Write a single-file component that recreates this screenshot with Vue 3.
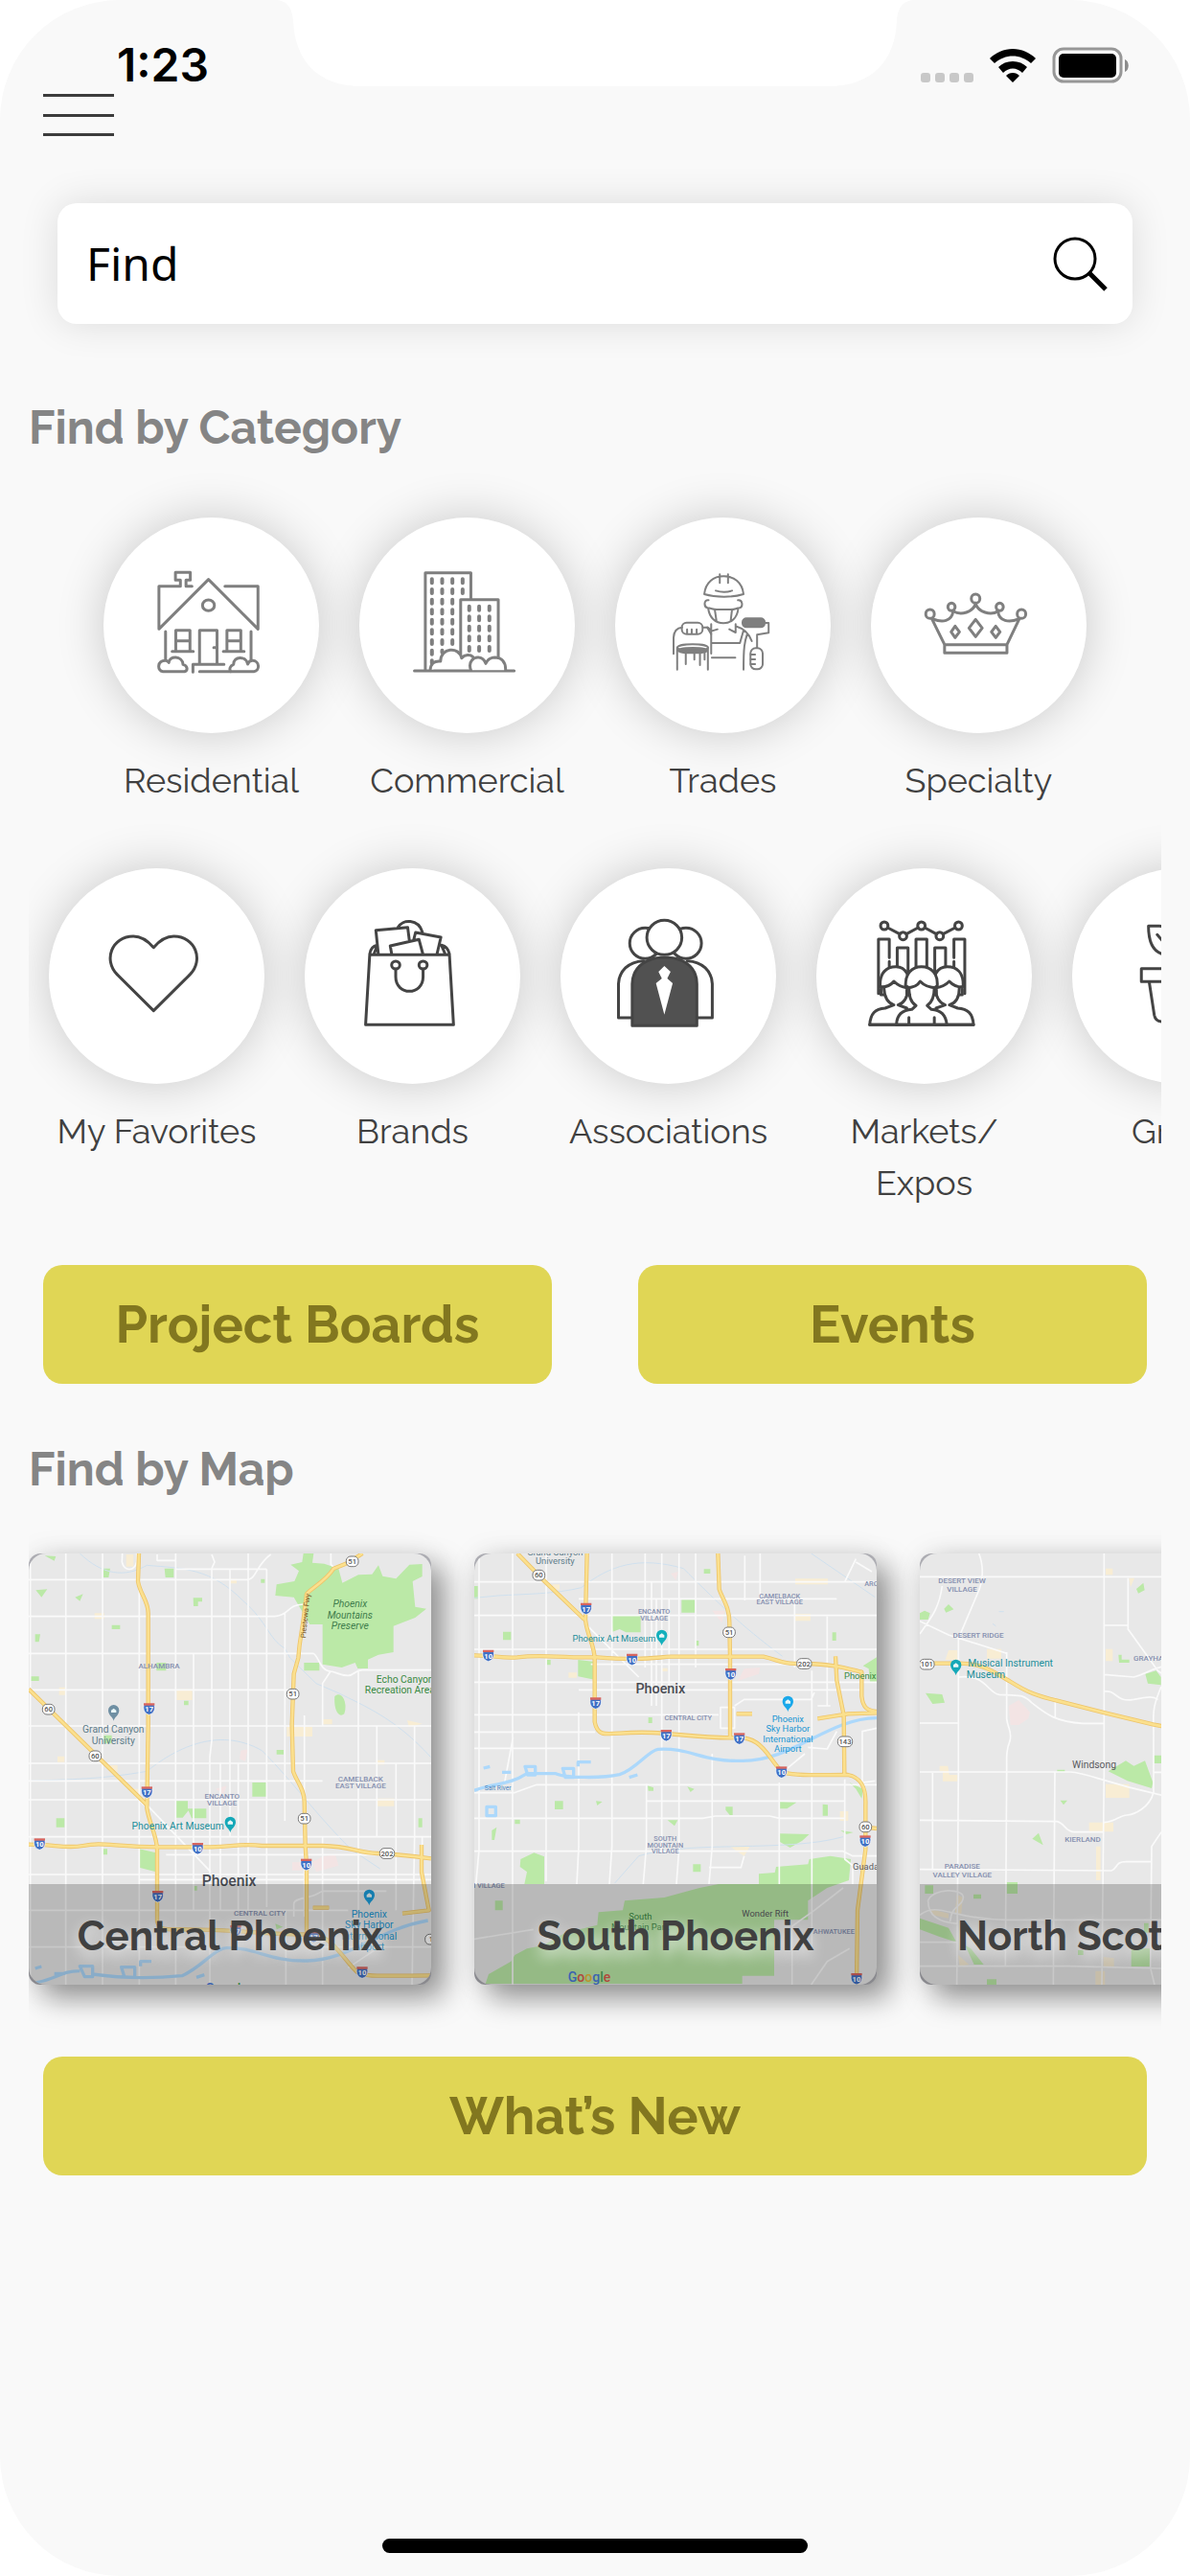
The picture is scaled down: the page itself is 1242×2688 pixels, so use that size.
<script setup>
import { ref } from 'vue'

const query = ref('')

const building = (xs, ys) =>
  xs.map((x) => ys.map((y) => `M${x} ${y}v12`).join('')).join('')

const categories = [
  {
    label: 'Residential',
    box: '52 60 653 675',
    tone: 'soft',
    art: `<path d="M285 275V256H270V232H315V256H302V275H320M285 275H220V409L370 254L520 409V275H420"/>
      <ellipse cx="370" cy="335" rx="18" ry="17"/>
      <path d="M240 417V505M499 417V505M271 475V413H314V475M271 446H314M426 475V413H468V475M426 446H468M260 479H324M415 479H478M343 518V413H396V518M386 467H394M323 544V520H417M343 542H437"/>
      <path d="M232 542C214 540 214 508 240 508C247 508 246 512 250 514C250 492 292 492 293 520C308 524 308 540 297 542ZM437 542C432 534 436 524 446 520C446 493 484 492 489 519C492 510 498 508 503 508C526 508 526 540 508 542Z"/>`,
  },
  {
    label: 'Commercial',
    box: '828 60 653 675',
    tone: 'soft',
    art: `<path d="M995 540H1297M1028 538V233H1166V313M1135 490V317H1249V498"/>
      <path stroke-width="4" d="${building([1048, 1079, 1110], [253, 285, 317, 349, 380, 412, 444])}${building([1141], [253, 285])}M1048 476v12M1048 508v8M1079 476v6${building([1161, 1191, 1222], [338, 370, 401, 433, 465])}"/>
      <path fill="#fff" d="M1043 538C1044 518 1054 508 1074 510C1074 468 1130 462 1138 500C1148 488 1164 488 1172 496"/>
      <path fill="#fff" d="M1166 538C1156 510 1176 496 1190 498C1200 499 1208 508 1211 517C1218 501 1230 498 1240 498C1260 499 1272 514 1271 538"/>`,
  },
  {
    label: 'Trades',
    box: '64 60 653 675',
    tone: 'fine',
    art: `<path d="M334 300C338 262 362 244 393 244C424 244 449 262 453 300C418 311 370 311 334 300ZM381 238V265M406 238V265M369 289C384 294 404 294 418 289"/>
      <path d="M347 319C332 316 332 340 344 343C356 344 360 348 372 348H415C427 348 430 344 441 343C452 340 451 317 436 319M346 345C350 374 368 391 392 391C416 391 434 374 437 345M366 349L371 384M418 349L414 384"/>
      <path d="M355 394V416L374 410M330 404H345L355 414M429 394V420L410 410M432 401C456 408 470 424 478 447M453 413L442 453H357M355 400V486M464 425C456 450 453 464 453 536M357 499H428"/>
      <path d="M241 487V436C242 416 252 405 267 404M343 404L355 425"/>
      <rect x="266" y="389" width="63" height="36" rx="15"/><path d="M282 423V410M296 423V410M311 423V410"/>
      <path d="M252 536V467M345 536V467M278 478V519M304 478V505M321 478V522M335 478V505"/>
      <ellipse cx="299" cy="467" rx="46" ry="10"/><ellipse cx="299" cy="476" rx="44" ry="8" fill="#7f7f7f"/>
      <rect x="450" y="376" width="67" height="27" rx="12" fill="#7f7f7f"/>
      <path d="M517 390H529V421L494 427V468"/><rect x="474" y="469" width="37" height="66" rx="16"/><path d="M475 489H488M475 504H488M475 519H488"/>`,
  },
  {
    label: 'Specialty',
    box: '839 60 653 675',
    tone: 'soft',
    art: `<ellipse cx="1156" cy="314" rx="13" ry="14"/><ellipse cx="1083" cy="340" rx="11" ry="12"/><ellipse cx="1229" cy="340" rx="11" ry="12"/><ellipse cx="1018" cy="362" rx="13" ry="14"/><ellipse cx="1295" cy="362" rx="13" ry="14"/>
      <path d="M1023 376L1062 458H1251L1289 376M1027 378C1055 389 1084 386 1088 353C1112 368 1148 356 1156 330C1164 356 1202 368 1224 353C1226 386 1258 389 1286 378M1062 458V484H1251V458"/>
      <path d="M1156 379L1176 406L1156 433L1136 406ZM1094 400L1107 418L1094 436L1082 418ZM1217 400L1230 418L1217 436L1204 418Z"/>`,
  },
]

const collections = [
  {
    label: 'My Favorites',
    box: '87 78 630 675',
    tone: 'dark',
    art: `<path d="M393 326C372 300 352 291 334 291C270 291 246 366 286 410L393 524L500 410C540 366 516 291 452 291C434 291 414 300 393 326Z"/>`,
  },
  {
    label: 'Brands',
    box: '834 78 630 675',
    tone: 'dark',
    art: `<path d="M1024 349H1257L1269 568H1012ZM1024 347C1026 332 1032 322 1046 319M1037 345L1046 320M1257 347C1254 332 1248 322 1234 319M1244 345L1234 320M1049 345L1042 272L1135 263L1140 305M1106 264C1120 236 1166 236 1178 278M1153 300L1158 279L1232 294L1221 345M1088 345L1084 321L1168 301L1179 345"/>
      <ellipse cx="1100" cy="381" rx="12" ry="12"/><ellipse cx="1180" cy="381" rx="12" ry="12"/>
      <path d="M1100 394V418C1100 478 1180 478 1180 418V394"/>`,
  },
  {
    label: 'Associations',
    box: '57 78 517 675',
    tone: 'dark',
    art: `<ellipse cx="260" cy="313" rx="37" ry="48"/><ellipse cx="358" cy="313" rx="37" ry="48"/>
      <path d="M196 546V440C197 400 220 370 256 368M421 546V440C420 400 397 370 361 368M196 546H229M385 546H421"/>
      <path fill="#515151" d="M229 571V440C230 380 272 354 307 358C342 354 384 380 384 440V571Z"/>
      <ellipse cx="306" cy="295" rx="42" ry="54" fill="#fff"/>
      <path fill="#fff" stroke="none" d="M306 384L321 402L313 423L326 438L306 536L286 438L300 423L292 402Z"/>`,
  },
  {
    label: 'Markets/\nExpos',
    box: '671 78 517 675',
    tone: 'dark',
    art: `<ellipse cx="834" cy="258" rx="9" ry="12"/><ellipse cx="879" cy="290" rx="9" ry="12"/><ellipse cx="923" cy="258" rx="9" ry="12"/><ellipse cx="967" cy="290" rx="9" ry="12"/><ellipse cx="1012" cy="258" rx="9" ry="12"/>
      <path d="M842 264L871 284M887 284L915 264M931 264L959 284M975 284L1004 264M820 470V300H846V358M846 370V390M1027 470V300H1001V358M1001 370V390M865 385V327H891V400M955 400V327H981V385M910 388V300H936V388"/>
      <path fill="#fff" d="M799 568C801 532 812 518 836 516L857 506C838 498 834 476 833 452L824 448C822 405 840 386 862 386C888 386 896 420 892 452C890 480 882 500 867 506L888 516V568ZM1048 568C1046 532 1034 518 1010 516L990 506C1010 498 1014 476 1014 452L1023 448C1025 405 1008 386 985 386C958 386 950 420 955 452C958 480 966 500 980 506L958 516V568Z"/>
      <path d="M826 450C838 450 850 444 857 432C866 444 876 450 888 452M1021 450C1010 450 998 444 990 432C981 444 970 450 958 452M826 456V474H834M1021 456V474H1013"/>
      <path fill="#fff" d="M863 568C864 540 874 522 900 520L910 508C896 496 894 478 893 452L885 446C884 408 900 386 923 386C947 386 963 408 961 446L954 452C954 478 950 496 937 508L947 520C972 522 982 540 984 568Z"/>
      <path d="M887 452C900 452 914 446 920 432C930 446 944 452 960 452M888 456V474H895M959 456V474H952M893 568V545M954 568V545M799 568H1048"/>`,
  },
  {
    label: 'Green',
    box: '1285 78 517 675',
    tone: 'dark',
    art: `<path d="M1468 259H1494C1530 262 1540 290 1538 346H1500C1476 336 1468 306 1468 259ZM1489 286L1538 360V392M1451 392H1626V433H1451ZM1470 436L1482 538C1484 552 1490 558 1500 558H1576C1586 558 1592 552 1594 538L1606 436"/>`,
  },
]

const SHIELD = 'M-16-13C-19-4-19 14 0 19C19 14 19-4 16-13Z'
const PIN = 'M0 25C-2 12-17 8-17-8A17 17 0 0 1 17-8C17 8 2 12 0 25Z'

const maps = [
  {
    name: 'Central Phoenix',
    scale: 'near',
    box: '30 63 1260 1350',
    parks:
      'M890 63H922L918 92L955 95L1000 110L1012 155L1062 130L1105 128L1125 100L1138 134L1180 142L1222 98L1262 96L1262 135L1232 150L1240 230L1275 236L1240 264L1172 290V372L1125 380L1092 395V423H1060L1052 405L1010 420L950 410V285H910L860 200L802 195L806 160L862 150L876 118L850 98L886 90ZM264 110H285L280 138H264ZM455 110H484V138H458ZM545 202H573V214H560V228H546ZM290 287H316V300H290ZM892 405H940V430H892ZM988 510C1010 490 1030 530 1018 565C1000 580 984 550 988 510ZM730 780H774V824H730ZM490 838H528V862H586V892H540L530 868L512 890H490ZM116 892H142V920H116ZM376 988L428 1000V1060L376 1046ZM265 632H290V658H265ZM430 405H460V430H430ZM806 678H828V692H806ZM516 524H530V538H516ZM50 316H66L62 340H50ZM52 178L88 175L70 200ZM175 200L200 190L190 212ZM36 448H62V462H36ZM1250 892H1262V920H1250ZM262 988H276V1006H262ZM545 1104H557V1118H545ZM802 1222L826 1232L806 1240ZM757 143H769V155H757ZM80 70L115 72L110 86Z',
    sand: 'M493 488H542V522H493ZM838 606H918V636H838ZM1122 830H1174V854H1122ZM236 250H266V268H236ZM355 800H376V816H355ZM660 143H681V157H660ZM125 482H145V506H125ZM120 698H142V716H120ZM284 726H308V746H284ZM950 582H980V598H950ZM1215 585L1262 596L1220 606ZM1118 710H1144V724H1118ZM335 66H358V104H335Z',
    pink: 'M950 1012L990 1006L1000 1040L930 1060L918 1030ZM694 680L716 676L708 714L690 706ZM615 800L650 790L640 816ZM855 1030H885V1055H855Z',
    creek:
      'M190 63C260 130 330 140 400 100C520 110 600 110 700 210C780 280 780 330 832 360L848 390L930 470L1000 500C1080 540 1180 580 1288 700M30 775C160 770 260 770 400 745C480 680 620 600 760 680C860 780 920 870 1040 990L1130 1050',
    river:
      'M30 1410C120 1400 120 1370 190 1370M190 1355H230V1388H205ZM320 1358H362V1390H330ZM230 1380C300 1390 400 1395 510 1385C570 1360 610 1300 650 1298C740 1295 780 1340 900 1338C1040 1335 1120 1240 1280 1212M50 1362L70 1356M110 1378H144M380 1355V1340H414M555 1390L580 1382',
    streets:
      'M35 63V1413M146 63V1413M261 63V1413M376 145V1413M490 63V1413M546 376V1180M717 63V1100M775 112V1170M660 112V950M893 570V1200M1120 603V950M1180 720V1180M1238 603V950L1230 1413M1062 430V1180M832 250V900M1262 950V1000M30 145H716C740 145 745 95 788 66M30 260H800C850 255 835 225 890 222M30 376H920C935 376 940 430 975 432C990 432 1000 445 1030 445C1050 445 1050 428 1075 428H1290M30 490H850M30 603H1290M30 720H1290M30 775H950M30 834H1290M30 950H1290M460 1006H1180M30 1068H1290M376 1084H1290M30 1180H1030M30 1295H560M900 1295H1290M976 63V98L990 110M950 603V470L975 432M432 66V85H490M490 112H775M603 66L612 90L603 110V650L597 700V1413M630 720V1180M686 720V1180M717 834V1180M835 1180V1413M950 950V1413M400 850L600 1060M346 800L390 850M860 1200V1160C860 1140 920 1140 930 1130L950 1120H1150M1030 1360L1120 1300M323 63L322 90C330 120 360 120 368 90V63',
    highways:
      'M375 63L372 150C378 190 404 210 404 250V600L400 860C405 900 432 950 432 990V1215C440 1245 460 1240 520 1240C700 1240 800 1260 920 1255C980 1260 1020 1340 1060 1375C1080 1390 1150 1384 1290 1384M30 488L400 850M30 974C110 974 150 988 200 978C260 965 300 982 440 982H600C680 980 700 970 760 978H950C1040 980 1060 1000 1120 1002C1180 1004 1230 1010 1290 1018M1075 63L1030 92L985 110C960 150 910 175 900 190L890 270C885 310 878 330 874 390L860 440L854 600L858 745C870 780 893 800 893 840L896 980L900 1040V1255M1260 975V1060L1283 1180L1200 1190M920 1172H970',
    shields: [[407, 549, '17'], [400, 810, '17'], [434, 1136, '17'], [64, 972, '10'], [559, 986, '10'], [899, 1036, '10'], [1074, 1374, '10'], [678, 1244, '17'], [922, 1262, '17']],
    routes: [[1043, 88, '51'], [857, 503, '51'], [893, 893, '51'], [1152, 1002, '202'], [92, 551, '60'], [238, 697, '60'], [1290, 1271, '1']],
    pins: [[296, 562, '#6f8fa3'], [661, 912, '#14a8b8'], [1096, 1140, '#1c9edb']],
    labels: [
      [1036, 232, 'Phoenix', 'park'], [1036, 266, 'Mountains', 'park'], [1036, 300, 'Preserve', 'park'],
      [1208, 468, 'Echo Canyon', 'green'], [1192, 502, 'Recreation Area', 'green'],
      [438, 422, 'ALHAMBRA', 'area'], [635, 831, 'ENCANTO', 'area'], [635, 853, 'VILLAGE', 'area'],
      [1069, 776, 'CAMELBACK', 'area'], [1069, 798, 'EAST VILLAGE', 'area'], [753, 1196, 'CENTRAL CITY', 'area'],
      [295, 624, 'Grand Canyon', 'place'], [295, 659, 'University', 'place'],
      [497, 926, 'Phoenix Art Museum', 'teal'], [657, 1103, 'Phoenix', 'city'],
      [1096, 1203, 'Phoenix', 'blue'], [1096, 1237, 'Sky Harbor', 'blue'], [1096, 1271, 'International', 'blue'], [1096, 1305, 'Airport', 'blue'],
    ],
    turned: [896, 258, 'Piestewa Fwy'],
    logo: [650, 1440],
  },
  {
    name: 'South Phoenix',
    scale: 'far',
    box: '45 63 1260 1350',
    parks:
      'M475 258H566V310H520L500 300L478 308ZM694 208H736V248H694ZM135 308H160V334H135ZM370 396L422 402V458L370 448ZM45 165H56V205H45ZM764 112H784V126H764ZM1166 310H1178V336H1166ZM1262 415L1305 388V465H1284L1280 424ZM297 838H323V864H297ZM426 838L446 840L430 852ZM588 790L606 796V806H590ZM712 793L734 800L722 810ZM832 856H854V882H845L832 866ZM1002 840L1054 842L1024 862H1002ZM1136 848L1152 850V884H1136ZM172 896H188V910H172ZM650 898H682L672 916ZM1002 940L1094 942L1072 962L1034 984L1002 966ZM730 1036H754V1060H730ZM190 1020L232 1000L264 1012V1098H202L210 1060L188 1044ZM936 1066L986 1062L990 1044L1090 1036L1094 1020L1160 1010L1224 1020L1218 1086L1150 1110L1090 1150V1210H984V1385H884V1410H80L90 1380L160 1340L172 1320L210 1300L260 1290L330 1250L430 1226L434 1186L510 1180L516 1150L640 1140L750 1110L810 1098H936ZM110 1150H134V1180H110ZM272 396H284V412H272ZM738 336H748V352H738ZM590 576H602V594H590ZM1192 930L1232 936L1210 942ZM100 930L115 920L108 960H100ZM1220 780L1262 800L1258 830L1240 800Z',
    sand: 'M1050 252H1098V274H1050ZM1050 142H1152V160H1050ZM846 980H908L890 1010ZM340 436H366V452H340ZM630 422H650V432H630ZM290 160H312V176H290ZM1190 870H1216V900H1190Z',
    pink: 'M890 424L940 420L936 440L870 462ZM660 126L684 120L676 146ZM790 242H830L820 280Z',
    creek:
      'M45 202L120 195C200 190 300 190 380 170C470 100 560 70 700 110C790 200 880 290 1010 385M1100 63L1300 200M485 1095L560 1010C720 960 1020 1000 1200 950',
    river:
      'M45 805C110 780 150 790 210 752H300C330 765 440 768 500 755C550 740 590 680 620 676C720 670 760 716 880 712C1040 716 1150 580 1305 578M204 730H236V756H212ZM322 736H356V764H330ZM74 735L94 730M132 748H160M370 730V716H410M530 764L556 756M84 856H112V884H84Z',
    streets:
      'M60 63V990L50 1100M165 63V1413M270 63V1090M372 560V980L366 1098M476 63V980L468 1098M584 784V980L574 1098M632 63V1000M686 63V990L678 1098M790 690V980L780 1098M1000 780V1098M1102 430V1300M1205 770V1020L1230 1040V1098M1048 210V420M738 63V420M892 70V210M940 63V210M1150 260V540M1120 540H1160M580 63V420M45 152H1305M372 205H1180M45 257H1305M45 363H1305M410 410H1102M45 466H1305M372 490H1260M45 568H810M45 622H424M45 673H470M45 812H170L240 787H1305M584 838H1205M45 892H760L800 885H970L1000 892H1205M45 995H1200L1230 1010H1305M780 1046H880L890 1010M390 280L560 450M1205 152L1240 80M1240 90L1290 120M816 610V545H860V610ZM860 540L890 520H1100L1110 498M1180 620L1150 675L1090 670M1020 740L1080 690M600 152V540M615 205V540M655 205V490M1305 610L1260 620V780L1300 775M1040 1413V1230L1110 1180L1200 1110M1100 1413L1150 1340L1220 1300M45 1270L230 1240M140 780L166 640',
    highways:
      'M180 63L260 145L390 270M398 63L393 270C398 320 422 350 422 395V590C430 632 450 630 500 626C640 615 700 640 850 640C950 630 960 700 1010 748C1060 760 1120 756 1215 756C1260 765 1272 800 1270 850V990L1245 1180L1242 1413M45 382C110 382 130 392 180 388C260 378 300 390 430 388C560 398 600 390 660 386H950C1010 400 1000 408 1080 408C1170 410 1200 420 1258 434V510C1262 550 1280 555 1305 558M808 63L812 175C822 205 844 230 844 280L846 390V640M1176 385L1180 460L1202 570L1204 760M1120 580L1215 565L1305 562M866 565H915M1270 920L1305 924',
    shields: [[395, 235, '17'], [89, 382, '10'], [539, 394, '10'], [848, 440, '10'], [425, 531, '17'], [646, 632, '17'], [875, 642, '17'], [1007, 747, '10'], [1269, 963, '10'], [1242, 1394, '10']],
    routes: [[247, 131, '60'], [843, 310, '51'], [1078, 408, '202'], [1206, 652, '143'], [1270, 919, '60']],
    pins: [[632, 327, '#14b0bc'], [1027, 534, '#1aa8ea']],
    labels: [
      [298, 68, 'Grand Canyon', 'place'], [298, 97, 'University', 'place'],
      [608, 252, 'ENCANTO', 'area'], [608, 273, 'VILLAGE', 'area'], [1001, 203, 'CAMELBACK', 'area'], [1001, 223, 'EAST VILLAGE', 'area'],
      [1313, 164, 'ARCADIA', 'area'], [715, 584, 'CENTRAL CITY', 'area'],
      [643, 962, 'SOUTH', 'area'], [643, 983, 'MOUNTAIN', 'area'], [643, 1003, 'VILLAGE', 'area'],
      [483, 339, 'Phoenix Art Museum', 'teal'], [628, 500, 'Phoenix', 'city'],
      [1027, 591, 'Phoenix', 'blue'], [1027, 622, 'Sky Harbor', 'blue'], [1027, 653, 'International', 'blue'], [1027, 684, 'Airport', 'blue'],
      [1281, 455, 'Phoenix Zoo', 'green'], [119, 803, 'Salt River', 'stream'], [1297, 1053, 'Guadalupe', 'town'],
      [54, 1109, 'LAVEEN VILLAGE', 'area'], [565, 1210, 'South', 'green'], [565, 1241, 'Mountain Park', 'green'],
      [956, 1200, 'Wonder Rift', 'town'], [1171, 1254, 'AHWATUKEE', 'area'],
    ],
    logo: [405, 1404],
  },
  {
    name: 'North Scottsdale',
    scale: 'near',
    box: '90 63 1260 1350',
    parks:
      'M90 250L105 242L122 250L116 270H90ZM166 236L180 222L196 238L172 248ZM768 174L790 155L794 178L774 188ZM108 500L160 504L168 530L130 534ZM712 380H722V395H746V405H714ZM796 440L830 430L845 450V475L804 470ZM680 745L735 712L760 728L795 712L820 780L816 798L740 775ZM822 695H846V720H822ZM530 836H552L540 850ZM442 956L462 938L476 976ZM362 1092H396V1128H362ZM106 1102H132V1128H106ZM258 1130H282V1144H258ZM90 1205L180 1235L205 1280L150 1262L90 1240ZM232 1290L250 1300L290 1350L260 1350ZM752 1300H810V1356H752ZM300 1396H330V1413H300ZM585 1305H602V1320H585ZM520 740H544V746H520ZM792 1220H806V1250H792Z',
    sand: 'M672 110H694V130H672ZM745 140H762L750 168ZM672 362H694V400H672ZM300 362H345V392H300ZM180 366H208V396H170ZM672 785H746V828H672ZM620 905H696V934H620ZM642 980H656V1086H642ZM152 728H178L182 756H208V776H162V745H152ZM206 1130L224 1140L220 1190H200ZM210 1320L244 1350L215 1356ZM665 1326L698 1330V1356H665ZM640 1370H670V1413H640ZM120 1175L180 1190V1205L130 1195Z',
    pink: 'M368 540L400 522L435 560L430 580L400 600H374Z',
    creek: 'M318 283L328 290M338 245H353',
    river: '',
    streets:
      'M211 320V745L206 1413M362 372V580C365 610 380 620 372 650C360 680 362 700 362 740L358 1355M514 515V580M513 745L508 1413M667 63V740L660 1413M130 750V1050M275 63C290 100 290 150 270 190L215 320M160 165C150 240 120 270 90 315M90 275L180 318L360 375M90 136H850M667 288H742M742 140V300L835 430L850 440M667 442L760 450C800 440 800 430 846 418M667 495C710 490 700 530 760 520C810 510 820 510 836 520M846 480C820 540 820 560 822 620V810C810 860 760 880 740 882C720 880 700 905 667 905M211 450C300 440 300 500 340 505C400 510 410 500 440 530C490 570 520 590 600 595H667M90 594H211M90 747H560C620 750 660 780 850 820M90 898L520 902C545 908 545 935 575 935H667M90 1052L690 1056C710 1050 700 1028 735 1028H815M846 935L816 980L812 1360L825 1413M822 748H846M90 1355H560L850 1362M358 1210H850M90 1280H206M116 1150C130 1110 228 1110 226 1140C225 1170 190 1160 185 1215M116 1150C115 1210 170 1220 210 1222M90 1195C150 1150 190 1210 360 1210',
    highways: 'M130 407H210C290 405 330 440 370 462C430 500 460 510 520 524L670 562L820 598L860 606',
    shields: [],
    routes: [[112, 410, '101']],
    pins: [[203, 420, '#14a8b8']],
    labels: [
      [222, 156, 'DESERT VIEW', 'area'], [222, 182, 'VILLAGE', 'area'], [273, 326, 'DESERT RIDGE', 'area'],
      [824, 400, 'GRAYHAWK', 'area'], [600, 965, 'KIERLAND', 'area'], [223, 1050, 'PARADISE', 'area'], [223, 1076, 'VALLEY VILLAGE', 'area'],
      [374, 416, 'Musical Instrument', 'teal'], [297, 453, 'Museum', 'teal'], [636, 734, 'Windsong', 'town'],
    ],
  },
]

const logoLetters = [['G', '#4a7bdc'], ['o', '#dc5a4c'], ['o', '#e8b93a'], ['g', '#4a7bdc'], ['l', '#4fa660'], ['e', '#dc5a4c']]
</script>

<template>
  <div class="phone">
    <svg class="notch" viewBox="286 0 670 90" aria-hidden="true">
      <path fill="#fff" d="M286 0C300 0 305 8 306 22C308 62 330 90 378 90H864C912 90 934 62 936 22C937 8 942 0 956 0Z" />
    </svg>

    <div class="status">
      <time class="clock">1:23</time>
      <div class="signals">
        <span class="cell"><i v-for="n in 4" :key="n"></i></span>
        <svg width="50" height="37" viewBox="0 0 50 37" aria-hidden="true">
          <path d="M25 1C34 1 43 5 49 11L44 16C33 6 17 6 6 16L1 11C7 5 16 1 25 1ZM25 14C31 14 36 16 40 20L35 26C29 20 21 20 15 26L10 20C14 16 19 14 25 14ZM25 26C28 26 30 27 32 29L25 36L18 29C20 27 22 26 25 26Z" />
        </svg>
        <svg width="80" height="38" viewBox="0 0 80 38" aria-hidden="true">
          <rect x="2" y="2" width="70" height="34" rx="10" fill="none" stroke="#979797" stroke-width="3" />
          <rect x="7" y="7" width="60" height="25" rx="5" />
          <path d="M76 13C81 15 81 24 76 26Z" fill="#8c8c8c" />
        </svg>
      </div>
    </div>

    <header class="top">
      <button class="menu" type="button" aria-label="Menu"><i></i><i></i><i></i></button>
      <form class="search" role="search" @submit.prevent>
        <input v-model="query" type="text" placeholder="Find" aria-label="Find" />
        <button type="submit" aria-label="Search">
          <svg width="60" height="60" viewBox="0 0 60 60" fill="none" stroke="#000" aria-hidden="true">
            <circle cx="24" cy="25" r="21" stroke-width="3" />
            <path d="M39 40L56 57" stroke-width="5" />
          </svg>
        </button>
      </form>
    </header>

    <main>
      <h2>Find by Category</h2>
      <nav class="row" aria-label="Categories">
        <a v-for="c in categories" :key="c.label" class="item" href="#">
          <span class="disc">
            <svg :class="['art', c.tone]" :viewBox="c.box" preserveAspectRatio="none" aria-hidden="true" v-html="c.art"></svg>
          </span>
          <span class="label">{{ c.label }}</span>
        </a>
      </nav>
      <nav class="row scroller" aria-label="Collections">
        <a v-for="c in collections" :key="c.label" class="item" href="#">
          <span class="disc">
            <svg :class="['art', c.tone]" :viewBox="c.box" preserveAspectRatio="none" aria-hidden="true" v-html="c.art"></svg>
          </span>
          <span class="label">{{ c.label }}</span>
        </a>
      </nav>

      <div class="actions">
        <button class="action" type="button">Project Boards</button>
        <button class="action" type="button">Events</button>
      </div>

      <h2>Find by Map</h2>
      <div class="cards">
        <a v-for="m in maps" :key="m.name" class="card" href="#">
          <svg :class="['map', m.scale]" :viewBox="m.box" aria-hidden="true">
            <path :d="m.pink" fill="#f3e4e4" />
            <path :d="m.sand" fill="#f8edd4" />
            <path :d="m.parks" fill="#bbe9a7" />
            <path :d="m.creek" class="creek" />
            <path :d="m.streets" class="street" />
            <path v-if="m.river" :d="m.river" class="river" />
            <path :d="m.highways" class="casing" />
            <path :d="m.highways" class="highway" />
            <g v-for="([x, y, t], i) in m.shields" :key="'s' + i" :transform="`translate(${x} ${y})`">
              <path :d="SHIELD" fill="#3f6fc4" stroke="#fff" stroke-width="2" />
              <path d="M-17-17H17V-10H-17Z" fill="#d7655f" />
              <text class="num" y="10">{{ t }}</text>
            </g>
            <g v-for="([x, y, t], i) in m.routes" :key="'r' + i" :transform="`translate(${x} ${y})`">
              <rect :x="t.length > 2 ? -23 : -19" y="-16" :width="t.length > 2 ? 46 : 38" height="32" rx="14" fill="#fff" stroke="#777" stroke-width="3" />
              <text class="num route" y="8">{{ t }}</text>
            </g>
            <g v-for="([x, y, color], i) in m.pins" :key="'p' + i" :transform="`translate(${x} ${y})`">
              <path :d="PIN" :fill="color" />
              <path d="M-8-8L0-14L8-8V-1H-8Z" fill="#e9f7f8" />
            </g>
            <text v-for="([x, y, t, kind], i) in m.labels" :key="'l' + i" :x="x" :y="y" :class="kind">{{ t }}</text>
            <text v-if="m.turned" class="fwy" :transform="`translate(${m.turned[0]} ${m.turned[1]}) rotate(-84)`" y="8">{{ m.turned[2] }}</text>
            <text v-if="m.logo" class="logo" :x="m.logo[0]" :y="m.logo[1]"><tspan v-for="([ch, color], i) in logoLetters" :key="i" :fill="color">{{ ch }}</tspan></text>
          </svg>
          <span class="caption">{{ m.name }}</span>
        </a>
      </div>

      <div class="actions">
        <button class="action" type="button">What’s New</button>
      </div>
    </main>

    <div class="home"></div>
  </div>
</template>

<style>
body {
  background: #fff;
}
</style>

<style scoped>
.phone {
  position: relative;
  display: flex;
  flex-direction: column;
  box-sizing: border-box;
  min-height: 100vh;
  padding: 38px 0 24px;
  border-radius: 125px;
  background: #f9f9f9;
  overflow: hidden;
  font-family: Raleway, Lato, sans-serif;
  color: #404040;
}
button {
  border: 0;
  padding: 0;
  background: none;
  font: inherit;
  cursor: pointer;
}
a {
  color: inherit;
  text-decoration: none;
}
svg {
  display: block;
}
.notch {
  position: absolute;
  top: 0;
  left: 50%;
  width: 670px;
  transform: translateX(-50%);
}
.status {
  display: flex;
  justify-content: space-between;
  align-items: center;
  height: 60px;
  padding: 0 64px 0 122px;
}
.clock {
  font: 600 48px/60px Inter, sans-serif;
  color: #000;
}
.signals {
  display: flex;
  align-items: flex-end;
  gap: 16px;
}
.cell {
  display: flex;
  gap: 5px;
  margin-bottom: 1px;
}
.cell i {
  width: 10px;
  height: 10px;
  border-radius: 3px;
  background: #c8c8c8;
}
.menu {
  display: flex;
  flex-direction: column;
  justify-content: space-between;
  width: 74px;
  height: 44px;
  margin: 0 0 70px 45px;
}
.menu i {
  height: 3px;
  background: #3c3c3c;
}
.search {
  display: flex;
  align-items: center;
  height: 126px;
  margin: 0 60px;
  padding: 0 24px 0 30px;
  box-sizing: border-box;
  border-radius: 20px;
  background: #fff;
  box-shadow: 0 0 40px rgba(0, 0, 0, 0.12);
}
.search input {
  flex: 1;
  min-width: 0;
  border: 0;
  padding: 0;
  outline: 0;
  background: none;
  font: 48px/72px "Noto Sans", sans-serif;
  color: #000;
}
.search input::placeholder {
  color: #000;
  opacity: 1;
}
main {
  padding: 0 30px;
}
h2 {
  margin: 78px 0 64px;
  font-size: 48px;
  line-height: 60px;
  font-weight: 700;
  color: #858585;
}
.row {
  display: flex;
  justify-content: center;
}
.scroller {
  justify-content: flex-start;
  overflow-x: auto;
  scrollbar-width: none;
  margin-top: 15px;
  padding-top: 50px;
}
.item {
  flex: 0 0 267px;
  display: flex;
  flex-direction: column;
  align-items: center;
  gap: 22px;
}
.disc {
  width: 225px;
  height: 225px;
  border-radius: 50%;
  background: #fff;
  box-shadow: 0 0 50px rgba(0, 0, 0, 0.2);
}
.art {
  width: 100%;
  height: 100%;
  fill: none;
  stroke-linecap: round;
  stroke-linejoin: round;
}
.art :deep(*) {
  vector-effect: non-scaling-stroke;
}
.soft {
  stroke: #7f7f7f;
  stroke-width: 3px;
}
.fine {
  stroke: #7f7f7f;
  stroke-width: 2px;
}
.dark {
  stroke: #444;
  stroke-width: 3px;
}
.label {
  font-size: 36px;
  line-height: 54px;
  font-weight: 400;
  text-align: center;
  white-space: pre-line;
}
.actions {
  display: flex;
  gap: 90px;
  margin: 59px 15px 57px;
}
.action {
  flex: 1;
  height: 124px;
  border-radius: 20px;
  background: #e0d655;
  color: #82771f;
  font-size: 54px;
  line-height: 66px;
  font-weight: 700;
}
.actions + h2 {
  margin: 59px 0 18px;
}
.cards {
  display: flex;
  gap: 45px;
  padding: 40px 0 60px;
  overflow-x: auto;
  scrollbar-width: none;
}
.cards + .actions {
  margin-top: 15px;
}
.card {
  position: relative;
  flex: 0 0 420px;
  border-radius: 12px;
  background: #acacb2;
  box-shadow: 14px 14px 30px rgba(0, 0, 0, 0.4), 0 0 30px rgba(0, 0, 0, 0.08);
}
.map {
  width: 100%;
  border-radius: 18px;
  background: #e8e8e8;
  font-family: Roboto, sans-serif;
}
.caption {
  position: absolute;
  inset: auto 0 0;
  height: 105px;
  box-sizing: border-box;
  padding-top: 4px;
  border-radius: 0 0 12px 12px;
  background: rgba(0, 0, 0, 0.2);
  font-size: 42px;
  line-height: 101px;
  font-weight: 700;
  text-align: center;
  text-shadow: 0 6px 15px rgba(255, 255, 255, 0.8);
}
.map path {
  stroke-linejoin: round;
}
.creek,
.street,
.river,
.casing,
.highway {
  fill: none;
}
.creek {
  stroke: #cfe0ee;
  stroke-width: 3px;
}
.street {
  stroke: #fafafa;
  stroke-width: 5px;
}
.river {
  stroke: #acd8fb;
  stroke-width: 10px;
}
.casing {
  stroke: #edc46a;
  stroke-width: 13px;
}
.highway {
  stroke: #fbe08e;
  stroke-width: 8px;
}
.map text {
  text-anchor: middle;
}
.near {
  font-size: 31px;
}
.far {
  font-size: 28px;
}
.map .num {
  font-size: 23px;
  font-weight: 700;
  fill: #fff;
}
.map .route {
  font-weight: 500;
  fill: #555;
}
.near .area {
  font-size: 24px;
}
.far .area {
  font-size: 22px;
}
.area {
  font-weight: 500;
  fill: #8690b0;
}
.park {
  font-style: italic;
  fill: #3f7d4c;
}
.green {
  fill: #3a8a43;
}
.place {
  fill: #607d8b;
}
.teal {
  fill: #1c8f9b;
}
.blue {
  fill: #2196d3;
}
.city {
  font-weight: 500;
  fill: #4a4d55;
}
.near .city {
  font-size: 47px;
}
.far .city {
  font-size: 43px;
}
.town {
  fill: #5a5a5f;
}
.stream {
  font-size: 20px;
  fill: #4a86c0;
}
.fwy {
  font-size: 23px;
  fill: #7a5a28;
}
.logo {
  font-size: 42px;
  font-weight: 500;
}
.home {
  width: 444px;
  max-width: 36%;
  height: 15px;
  margin: auto auto 0;
  border-radius: 8px;
  background: #000;
}
</style>
